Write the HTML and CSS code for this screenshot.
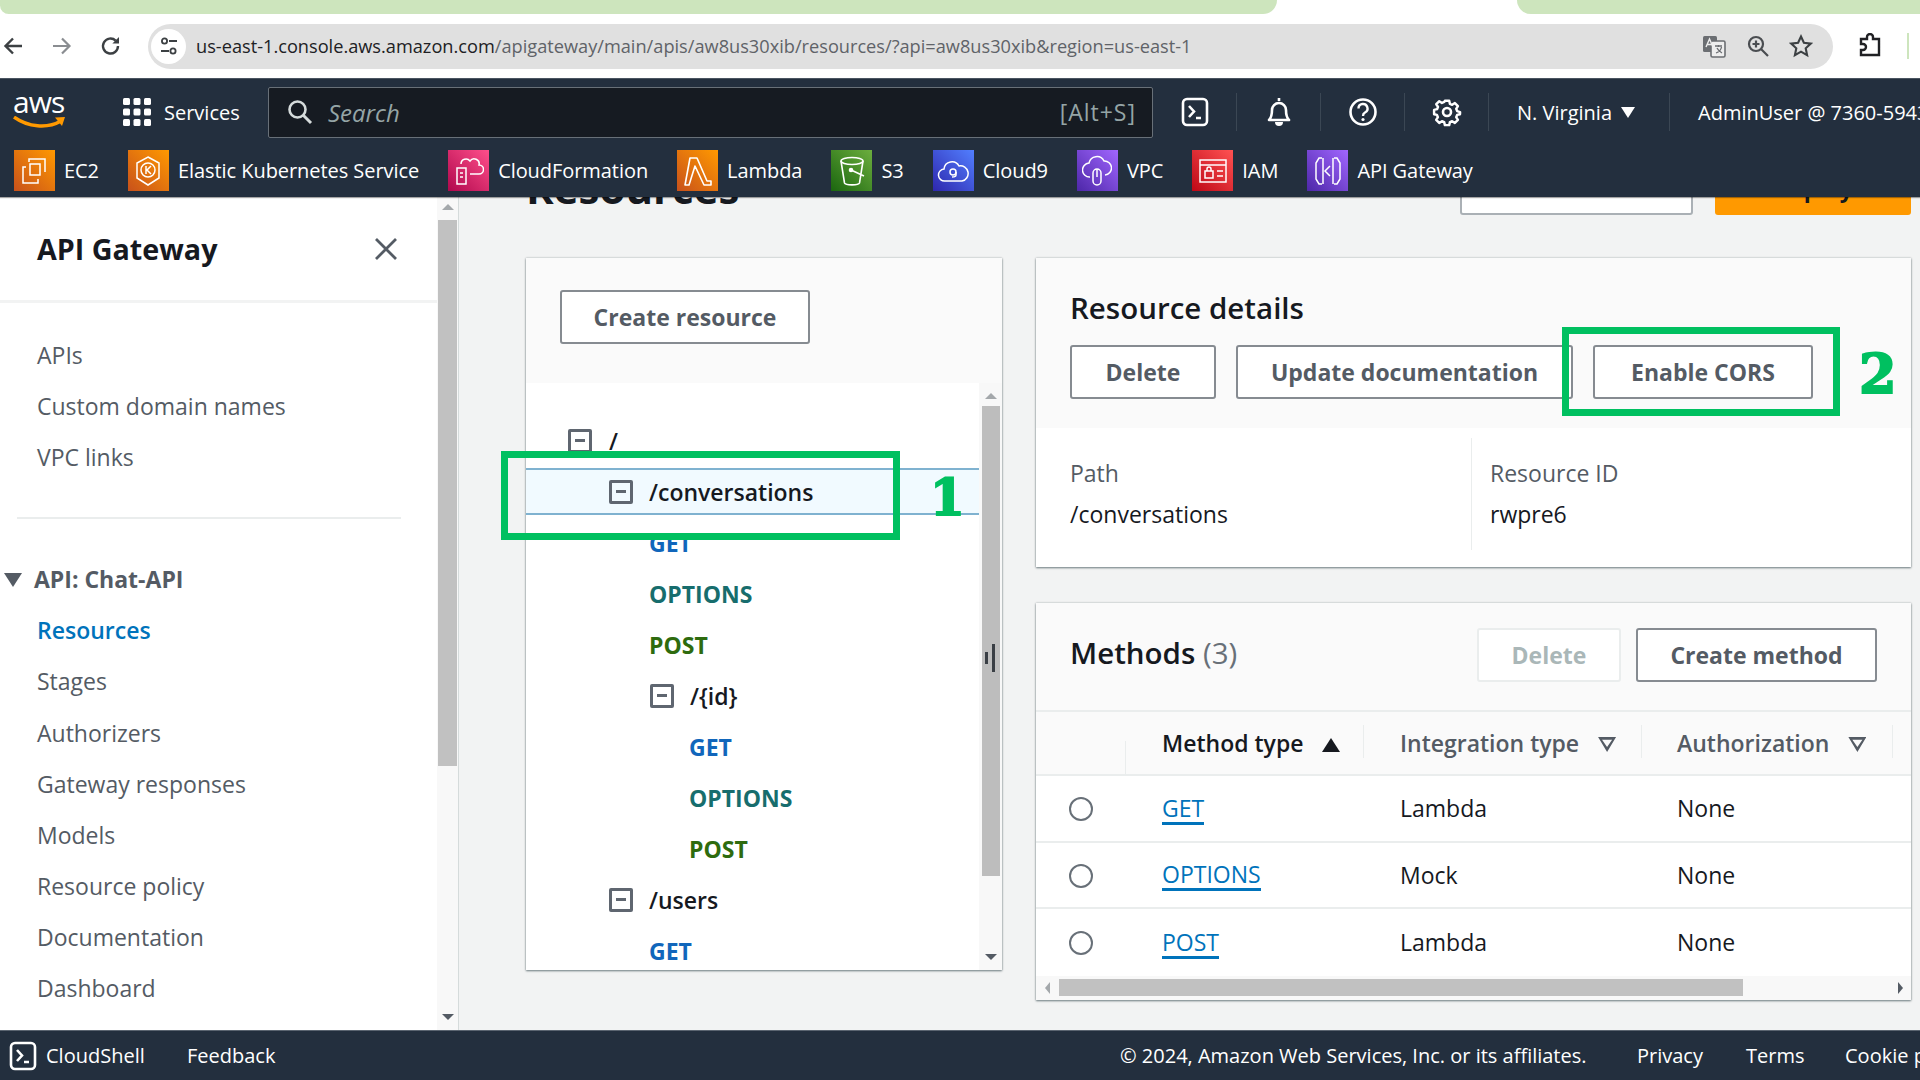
FILE: index.html
```html
<!DOCTYPE html>
<html lang="en">
<head>
    <meta charset="UTF-8">
    <title>API Gateway - Resources</title>
    <link rel="stylesheet" href="styles.css">
</head>
<body>
    <!-- browser chrome -->
    <div class="tab-strip">
        <div class="tab-left"></div>
        <div class="tab-right"></div>
    </div>
    <div class="browser-bar">
        <svg class="chrome-icon back" width="22" height="22" viewBox="0 0 22 22"><path d="M20 11H4M11 3.5 3.5 11l7.5 7.5" fill="none" stroke="#3c4043" stroke-width="2.4"/></svg>
        <svg class="chrome-icon forward" width="22" height="22" viewBox="0 0 22 22"><path d="M2 11h16M11 3.5l7.5 7.5-7.5 7.5" fill="none" stroke="#8a8d91" stroke-width="2.2"/></svg>
        <svg class="chrome-icon reload" width="22" height="22" viewBox="0 0 22 22"><path d="M18 11a7.5 7.5 0 1 1-2.3-5.4" fill="none" stroke="#3c4043" stroke-width="2.4"/><path d="M19 2v6.6h-6.6z" fill="#3c4043"/></svg>
        <div class="url-pill">
            <span class="tune-badge">
                <svg width="20" height="20" viewBox="0 0 20 20"><circle cx="5.5" cy="5" r="2.6" fill="none" stroke="#3c4043" stroke-width="1.8"/><path d="M10 5h8M2 15h8" stroke="#3c4043" stroke-width="1.8"/><circle cx="14" cy="15" r="2.6" fill="none" stroke="#3c4043" stroke-width="1.8"/></svg>
            </span>
            <span class="url-text"><b>us-east-1.console.aws.amazon.com</b>/apigateway/main/apis/aw8us30xib/resources/?api=aw8us30xib&amp;region=us-east-1</span>
            <svg class="pill-icon" width="26" height="26" viewBox="0 0 26 26"><rect x="2" y="3" width="14" height="16" rx="1.5" fill="#6b6e72"/><rect x="10" y="8" width="14" height="16" rx="1.5" fill="#eee" stroke="#6b6e72" stroke-width="1.6"/><path d="M14 13h7M17.500 12v2M15 20c3-1 5-3 5.500-6M16 15c1 2 3 4 5 5" fill="none" stroke="#6b6e72" stroke-width="1.3"/><path d="M5 14l3.500-8 3.500 8M6.500 11.500h4" fill="none" stroke="#eee" stroke-width="1.4"/></svg>
            <svg class="pill-icon" width="24" height="24" viewBox="0 0 24 24"><circle cx="10" cy="10" r="7" fill="none" stroke="#4a4d51" stroke-width="2.2"/><path d="M15 15l7 7M10 6.500v7M6.500 10h7" stroke="#4a4d51" stroke-width="2.200"/></svg>
            <svg class="pill-icon" width="24" height="24" viewBox="0 0 24 24"><path d="M12 2.500l2.900 6.300 6.900.8-5.100 4.700 1.400 6.800-6.100-3.500-6.100 3.500 1.400-6.800L2.200 9.600l6.900-.8z" fill="none" stroke="#3c4043" stroke-width="2.100"/></svg>
        </div>
        <svg class="puzzle" width="26" height="26" viewBox="0 0 26 26"><path d="M4 6h6V4a3 3 0 0 1 6 0v2h6v16H4v-5h2a3 3 0 0 0 0-6H4z" fill="none" stroke="#202124" stroke-width="2.4"/></svg>
        <span class="bar-tick"></span>
    </div>

    <!-- console top nav -->
    <header class="top-nav">
        <div class="nav-main">
            <div class="aws-logo">
                <span>aws</span>
                <svg width="54" height="13" viewBox="0 0 54 13"><path d="M1 1c14 10 33 12 47 4" fill="none" stroke="#f90" stroke-width="3.400"/><path d="M42 1.500l10-.5-3 9z" fill="#f90"/></svg>
            </div>
            <span class="logo-sep"></span>
            <svg class="grid-icon" width="28" height="28" viewBox="0 0 28 28" fill="#fff">
                <rect x="0" y="0" width="7" height="7" rx="1.500"/><rect x="10.500" y="0" width="7" height="7" rx="1.500"/><rect x="21" y="0" width="7" height="7" rx="1.500"/>
                <rect x="0" y="10.500" width="7" height="7" rx="1.500"/><rect x="10.500" y="10.500" width="7" height="7" rx="1.500"/><rect x="21" y="10.500" width="7" height="7" rx="1.500"/>
                <rect x="0" y="21" width="7" height="7" rx="1.500"/><rect x="10.500" y="21" width="7" height="7" rx="1.500"/><rect x="21" y="21" width="7" height="7" rx="1.500"/>
            </svg>
            <span class="services-label">Services</span>
            <div class="search-box">
                <svg width="26" height="26" viewBox="0 0 26 26"><circle cx="10.500" cy="10.500" r="8" fill="none" stroke="#d5dbdb" stroke-width="2.600"/><path d="M16 16l8 8" stroke="#d5dbdb" stroke-width="3"/></svg>
                <span class="search-placeholder">Search</span>
                <span class="search-hint">[Alt+S]</span>
            </div>
            <div class="nav-cell nav-cell-first">
                <svg width="28" height="30" viewBox="0 0 28 30"><rect x="2" y="2" width="24" height="26" rx="4" fill="none" stroke="#fff" stroke-width="2.600"/><path d="M8 9l5 5.500L8 20M15 21h5" fill="none" stroke="#fff" stroke-width="2.600"/></svg>
            </div>
            <div class="nav-cell">
                <svg width="30" height="32" viewBox="0 0 30 32"><path d="M15 2v3M5 24c3-3 3-6 3-10a7 7 0 0 1 14 0c0 4 0 7 3 10z" fill="none" stroke="#fff" stroke-width="2.600" stroke-linejoin="round"/><path d="M11 26a4 4 0 0 0 8 0z" fill="#fff"/></svg>
            </div>
            <div class="nav-cell">
                <svg width="30" height="30" viewBox="0 0 30 30"><circle cx="15" cy="15" r="12.500" fill="none" stroke="#fff" stroke-width="2.600"/><path d="M10.500 11.500a4.500 4.500 0 1 1 6.500 4c-1.500.8-2 1.500-2 3.500" fill="none" stroke="#fff" stroke-width="2.400"/><circle cx="15" cy="22.500" r="1.600" fill="#fff"/></svg>
            </div>
            <div class="nav-cell">
                <svg width="30" height="30" viewBox="0 0 30 30"><path d="M12.500 2h5l.8 3.600 2.600 1.100 3.100-2 3.500 3.500-2 3.100 1.100 2.600L30 15l-.1 2.500-3.300.8-1.100 2.600 2 3.100-3.500 3.500-3.100-2-2.600 1.100-.8 3.400h-5l-.8-3.400-2.600-1.100-3.100 2-3.500-3.500 2-3.100-1.100-2.600L.1 17.500V12.500l3.400-.8 1.100-2.600-2-3.100 3.500-3.500 3.100 2 2.600-1.100z" transform="translate(2 2) scale(.87)" fill="none" stroke="#fff" stroke-width="2.800" stroke-linejoin="round"/><circle cx="15" cy="15" r="4" fill="none" stroke="#fff" stroke-width="2.600"/></svg>
            </div>
            <div class="nav-cell nav-region">N. Virginia <span class="tri tri-down-white"></span></div>
            <div class="nav-cell nav-user">AdminUser @ 7360-5943-4152</div>
        </div>
        <nav class="shortcuts">
            <a class="shortcut"><span class="svc-icon svc-orange"><svg width="30" height="30" viewBox="0 0 30 30" fill="none" stroke="#fff" stroke-width="1.500"><rect x="10" y="8" width="10" height="11"/><path d="M12 3h13v13M6 11H3v16h15v-4"/><path d="M9 6V3h3"/></svg></span>EC2</a>
            <a class="shortcut"><span class="svc-icon svc-orange"><svg width="30" height="32" viewBox="0 0 30 32" fill="none" stroke="#fff" stroke-width="1.500"><path d="M15 2l11 6v15l-11 7-11-7V8z"/><circle cx="15" cy="15" r="7"/><path d="M13 11v8M18 11l-4 4 4 4"/></svg></span>Elastic Kubernetes Service</a>
            <a class="shortcut"><span class="svc-icon svc-pink"><svg width="30" height="30" viewBox="0 0 30 30" fill="none" stroke="#fff" stroke-width="1.500"><rect x="3" y="12" width="9" height="16"/><path d="M6 17h3M6 21h3M7 8a5 5 0 0 1 9-3 5 5 0 0 1 9 4 4 4 0 0 1 0 9h-9"/></svg></span>CloudFormation</a>
            <a class="shortcut"><span class="svc-icon svc-orange"><svg width="30" height="32" viewBox="0 0 30 32" fill="none" stroke="#fff" stroke-width="1.600"><path d="M7 3h7l10 23h4v4h-7L12 11 6 30H2z" stroke-linejoin="round"/></svg></span>Lambda</a>
            <a class="shortcut"><span class="svc-icon svc-green"><svg width="30" height="32" viewBox="0 0 30 32" fill="none" stroke="#fff" stroke-width="1.600"><ellipse cx="15" cy="6" rx="11" ry="3.500"/><path d="M4 6l3.500 22c1 2.500 14 2.500 15 0L26 6M14 15l13 6"/><circle cx="14" cy="15" r="1.500" fill="#fff"/></svg></span>S3</a>
            <a class="shortcut"><span class="svc-icon svc-blue"><svg width="32" height="26" viewBox="0 0 32 26" fill="none" stroke="#fff" stroke-width="1.500"><path d="M8 23a6 6 0 0 1-1-12 8 8 0 0 1 15-3 7 7 0 0 1 3 15z"/><circle cx="16" cy="14" r="3"/><path d="M19 14v3c0 2-3 2-4 2"/></svg></span>Cloud9</a>
            <a class="shortcut"><span class="svc-icon svc-purple"><svg width="30" height="34" viewBox="0 0 30 34" fill="none" stroke="#fff" stroke-width="1.500"><path d="M8 23a7 7 0 0 1-1-14 8 8 0 0 1 15-2 7 7 0 0 1 1 14"/><rect x="11" y="15" width="8" height="16" rx="4"/><path d="M15 15v8"/></svg></span>VPC</a>
            <a class="shortcut"><span class="svc-icon svc-red"><svg width="30" height="26" viewBox="0 0 30 26" fill="none" stroke="#fff" stroke-width="1.500"><rect x="2" y="2" width="26" height="22"/><path d="M2 7h26M19 13h6M19 18h6"/><rect x="7" y="13" width="8" height="7"/><path d="M9 13v-2a2 2 0 0 1 4 0v2"/></svg></span>IAM</a>
            <a class="shortcut"><span class="svc-icon svc-purple"><svg width="32" height="32" viewBox="0 0 32 32" fill="none" stroke="#fff" stroke-width="1.500"><path d="M10 3H7L4 8v16l3 5h3M22 3h3l3 5v16l-3 5h-3"/><path d="M18 11l-5 5 5 5M11 3v26M21 3v26"/></svg></span>API Gateway</a>
        </nav>
    </header>

    <main class="console-body">
        <aside class="side-nav">
            <div class="side-inner">
                <div class="side-head">
                    <h2>API Gateway</h2>
                    <svg width="24" height="24" viewBox="0 0 24 24"><path d="M2 2l20 20M22 2L2 22" stroke="#545b64" stroke-width="2.800"/></svg>
                </div>
                <ul class="side-list">
                    <li>APIs</li>
                    <li>Custom domain names</li>
                    <li>VPC links</li>
                </ul>
                <div class="side-divider"></div>
                <ul class="side-list side-list-api">
                    <li class="side-api"><span class="tri tri-side"></span>API: Chat-API</li>
                    <li class="side-active">Resources</li>
                    <li>Stages</li>
                    <li>Authorizers</li>
                    <li>Gateway responses</li>
                    <li>Models</li>
                    <li>Resource policy</li>
                    <li>Documentation</li>
                    <li>Dashboard</li>
                </ul>
            </div>
            <div class="side-scroll">
                <span class="tri tri-up"></span>
                <span class="side-thumb"></span>
                <span class="tri tri-down"></span>
            </div>
        </aside>

        <section class="content">
            <div class="page-head">
                <h1>Resources</h1>
                <button class="btn btn-actions">API actions</button>
                <button class="btn-deploy">Deploy</button>
            </div>
            <div class="columns">
                <div class="tree-panel">
                    <div class="tree-head">
                        <button class="btn btn-create">Create resource</button>
                    </div>
                    <div class="tree-body">
                        <div class="tree-list">
                            <div class="tree-row lvl-0"><span class="expander"></span><span class="res-name">/</span></div>
                            <div class="tree-row lvl-1 selected"><span class="expander"></span><span class="res-name">/conversations</span></div>
                            <div class="tree-row lvl-method"><span class="m-get">GET</span></div>
                            <div class="tree-row lvl-method"><span class="m-options">OPTIONS</span></div>
                            <div class="tree-row lvl-method"><span class="m-post">POST</span></div>
                            <div class="tree-row lvl-2"><span class="expander"></span><span class="res-name">/{id}</span></div>
                            <div class="tree-row lvl-method2"><span class="m-get">GET</span></div>
                            <div class="tree-row lvl-method2"><span class="m-options">OPTIONS</span></div>
                            <div class="tree-row lvl-method2"><span class="m-post">POST</span></div>
                            <div class="tree-row lvl-1"><span class="expander"></span><span class="res-name">/users</span></div>
                            <div class="tree-row lvl-method"><span class="m-get">GET</span></div>
                        </div>
                        <div class="tree-scroll">
                            <span class="tri tri-up"></span>
                            <span class="tree-thumb"><span class="grip"></span></span>
                            <span class="tri tri-down"></span>
                        </div>
                    </div>
                </div>

                <div class="right-col">
                    <div class="card">
                        <div class="card-head details-head">
                            <h3>Resource details</h3>
                            <div class="btn-row">
                                <button class="btn btn-delete">Delete</button>
                                <button class="btn btn-update">Update documentation</button>
                                <button class="btn btn-cors">Enable CORS</button>
                            </div>
                        </div>
                        <div class="details-body">
                            <div class="detail detail-path">
                                <div class="detail-label">Path</div>
                                <div class="detail-value">/conversations</div>
                            </div>
                            <div class="detail detail-id">
                                <div class="detail-label">Resource ID</div>
                                <div class="detail-value">rwpre6</div>
                            </div>
                        </div>
                    </div>

                    <div class="card methods-card">
                        <div class="card-head methods-head">
                            <h3>Methods <span class="count">(3)</span></h3>
                            <button class="btn btn-disabled">Delete</button>
                            <button class="btn btn-method">Create method</button>
                        </div>
                        <div class="table-head">
                            <div class="col-radio"><span class="col-sep"></span></div>
                            <div class="col-method th-active">Method type <span class="tri tri-sort"></span><span class="col-sep"></span></div>
                            <div class="col-type">Integration type <span class="tri-outline"></span><span class="col-sep"></span></div>
                            <div class="col-auth">Authorization <span class="tri-outline"></span><span class="col-sep"></span></div>
                        </div>
                        <div class="table-row">
                            <div class="col-radio"><span class="radio"></span></div>
                            <div class="col-method"><a class="link">GET</a></div>
                            <div class="col-type">Lambda</div>
                            <div class="col-auth">None</div>
                        </div>
                        <div class="table-row">
                            <div class="col-radio"><span class="radio"></span></div>
                            <div class="col-method"><a class="link">OPTIONS</a></div>
                            <div class="col-type">Mock</div>
                            <div class="col-auth">None</div>
                        </div>
                        <div class="table-row table-row-last">
                            <div class="col-radio"><span class="radio"></span></div>
                            <div class="col-method"><a class="link">POST</a></div>
                            <div class="col-type">Lambda</div>
                            <div class="col-auth">None</div>
                        </div>
                        <div class="h-scroll">
                            <span class="tri tri-left"></span>
                            <span class="h-thumb"></span>
                            <span class="tri tri-right"></span>
                        </div>
                    </div>
                </div>
            </div>
        </section>
    </main>

    <footer class="console-footer">
        <svg width="28" height="30" viewBox="0 0 28 30"><rect x="2" y="2" width="24" height="26" rx="4" fill="none" stroke="#fff" stroke-width="2.600"/><path d="M8 9l5 5.500L8 20M15 21h5" fill="none" stroke="#fff" stroke-width="2.600"/></svg>
        <span class="foot-shell">CloudShell</span>
        <span class="foot-feedback">Feedback</span>
        <span class="foot-copy">© 2024, Amazon Web Services, Inc. or its affiliates.</span>
        <span class="foot-privacy">Privacy</span>
        <span class="foot-terms">Terms</span>
        <span class="foot-cookie">Cookie preferences</span>
    </footer>

    <!-- tutorial annotations drawn over the screenshot -->
    <div class="mark mark-one"></div>
    <div class="mark mark-two"></div>
    <span class="mark-num mark-num-one">1</span>
    <span class="mark-num mark-num-two">2</span>
</body>
</html>
```

FILE: styles.css
```css
* {
    margin: 0;
    padding: 0;
    box-sizing: border-box;
}

html,
body {
    width: 1920px;
    height: 1080px;
    overflow: hidden;
}

body {
    position: relative;
    display: flex;
    flex-direction: column;
    font-family: "Open Sans", "Noto Sans", sans-serif;
    background: #f2f3f3;
    color: #16191f;
}

ul {
    list-style: none;
}

button {
    font-family: inherit;
}

/* browser chrome */
.tab-strip {
    height: 14px;
    display: flex;
    background: #fff;
    flex-shrink: 0;
}

.tab-left {
    width: 1277px;
    background: #cde5bd;
    border-radius: 0 0 16px 10px;
}

.tab-right {
    flex: 1;
    margin-left: 240px;
    background: #cde5bd;
    border-radius: 0 0 0 16px;
}

.browser-bar {
    height: 64px;
    flex-shrink: 0;
    background: #fff;
    display: flex;
    align-items: center;
}

.chrome-icon.back {
    margin-left: 2px;
}

.chrome-icon.forward {
    margin-left: 27px;
}

.chrome-icon.reload {
    margin-left: 27px;
}

.url-pill {
    margin-left: 26px;
    width: 1685px;
    height: 45px;
    background: #e0e0e0;
    border-radius: 23px;
    display: flex;
    align-items: center;
    padding-left: 3px;
    padding-right: 20px;
}

.tune-badge {
    width: 35px;
    height: 35px;
    border-radius: 50%;
    background: #fff;
    display: flex;
    align-items: center;
    justify-content: center;
    flex-shrink: 0;
}

.url-text {
    margin-left: 10px;
    flex: 1;
    font-size: 18.2px;
    color: #5f6368;
    white-space: nowrap;
}

.url-text b {
    font-weight: 400;
    color: #202124;
}

.pill-icon {
    margin-left: 19px;
}

.puzzle {
    margin-left: 24px;
}

.bar-tick {
    width: 2px;
    height: 26px;
    margin-left: 24px;
    background: #cde5bd;
}

/* console nav */
.top-nav {
    height: 119px;
    flex-shrink: 0;
    background: #232f3e;
    color: #fff;
    position: relative;
    z-index: 2;
    box-shadow: 0 1px 1px rgba(0, 0, 0, 0.35);
}

.nav-main {
    height: 67px;
    display: flex;
    align-items: center;
    padding-left: 13px;
    overflow: hidden;
    border-top: 1px solid #4a5561;
}

.aws-logo {
    width: 54px;
    height: 44px;
    position: relative;
    line-height: 30px;
    font-size: 30px;
    flex-shrink: 0;
}

.aws-logo span {
    display: block;
    margin-top: -3px;
    letter-spacing: -1px;
    font-family: "Open Sans", sans-serif;
}

.aws-logo svg {
    display: block;
    margin-top: -1px;
}

.logo-sep {
    width: 1px;
    height: 38px;
    margin-left: 28px;
    background: #3b4754;
}

.grid-icon {
    margin-left: 28px;
    flex-shrink: 0;
}

.services-label {
    margin-left: 13px;
    font-size: 20px;
    width: 75px;
    flex-shrink: 0;
}

.search-box {
    margin-left: 29px;
    width: 885px;
    height: 51px;
    flex-shrink: 0;
    background: #161b22;
    border: 1px solid #687078;
    border-radius: 2px;
    display: flex;
    align-items: center;
    padding: 0 16px 0 18px;
}

.search-placeholder {
    margin-left: 15px;
    font-size: 24px;
    font-style: italic;
    color: #95a5a6;
}

.search-hint {
    margin-left: auto;
    font-size: 23px;
    letter-spacing: 1px;
    color: #95a5a6;
}

.nav-cell {
    height: 38px;
    width: 84px;
    flex-shrink: 0;
    border-left: 1px solid #3b4754;
    display: flex;
    align-items: center;
    justify-content: center;
}

.nav-cell-first {
    border-left: 0;
    width: 83px;
}

.nav-region {
    width: 181px;
    justify-content: flex-start;
    padding-left: 28px;
    font-size: 20px;
    gap: 9px;
}

.nav-user {
    width: auto;
    justify-content: flex-start;
    padding-left: 28px;
    font-size: 20px;
    white-space: nowrap;
}

.shortcuts {
    height: 52px;
    display: flex;
    align-items: flex-start;
    padding-left: 14px;
    gap: 29px;
    font-size: 20px;
    letter-spacing: -0.06px;
}

.shortcut {
    display: flex;
    align-items: center;
    gap: 9px;
    height: 41px;
    margin-top: 5px;
    white-space: nowrap;
}

.svc-icon {
    width: 41px;
    height: 41px;
    display: flex;
    align-items: center;
    justify-content: center;
    flex-shrink: 0;
}

.svc-orange {
    background: linear-gradient(45deg, #c8511b, #f90);
}

.svc-pink {
    background: linear-gradient(45deg, #b0084d, #ff4f8b);
}

.svc-green {
    background: linear-gradient(45deg, #1b660f, #6cae3e);
}

.svc-blue {
    background: linear-gradient(45deg, #2e27ad, #527fff);
}

.svc-purple {
    background: linear-gradient(45deg, #4d27a8, #a166ff);
}

.svc-red {
    background: linear-gradient(45deg, #bd0816, #ff5252);
}

/* triangles */
.tri {
    display: inline-block;
    width: 0;
    height: 0;
    flex-shrink: 0;
}

.tri-up {
    border-left: 6px solid transparent;
    border-right: 6px solid transparent;
    border-bottom: 6px solid #a4a8ab;
}

.tri-down {
    border-left: 6px solid transparent;
    border-right: 6px solid transparent;
    border-top: 6px solid #545b64;
}

.tri-left {
    border-top: 6px solid transparent;
    border-bottom: 6px solid transparent;
    border-right: 5px solid #a4a8ab;
}

.tri-right {
    border-top: 6px solid transparent;
    border-bottom: 6px solid transparent;
    border-left: 5px solid #545b64;
}

.tri-down-white {
    border-left: 7px solid transparent;
    border-right: 7px solid transparent;
    border-top: 11px solid #fff;
}

.tri-side {
    border-left: 9px solid transparent;
    border-right: 9px solid transparent;
    border-top: 14px solid #545b64;
    margin-right: 12px;
}

.tri-sort {
    border-left: 9px solid transparent;
    border-right: 9px solid transparent;
    border-bottom: 14px solid #16191f;
    margin-left: 13px;
}

.tri-outline {
    display: inline-block;
    width: 18px;
    height: 15px;
    margin-left: 13px;
    background: #545b64;
    clip-path: polygon(0 0, 100% 0, 50% 100%, 0 0, 22% 18%, 50% 66%, 78% 18%, 22% 18%);
}

/* main area */
.console-body {
    flex: 1;
    min-height: 0;
    display: flex;
    overflow: hidden;
}

.side-nav {
    width: 459px;
    flex-shrink: 0;
    display: flex;
    background: #fff;
    border-right: 1px solid #d5dbdb;
}

.side-inner {
    width: 437px;
}

.side-head {
    height: 106px;
    border-bottom: 3px solid #f2f3f3;
    display: flex;
    align-items: center;
    justify-content: space-between;
    padding: 0 39px 0 37px;
}

.side-head h2 {
    font-size: 28.700px;
    font-weight: 700;
}

.side-list {
    padding-top: 27px;
    font-size: 23px;
    color: #545b64;
}

.side-list li {
    height: 51.100px;
    line-height: 51px;
    padding-left: 37px;
    white-space: nowrap;
}

.side-divider {
    margin: 34px 36px 0 17px;
    border-top: 2px solid #eaeded;
}

.side-list-api {
    padding-top: 35px;
}

.side-list .side-api {
    padding-left: 4px;
    font-weight: 700;
    display: flex;
    align-items: center;
}

.side-list .side-active {
    color: #0073bb;
    font-weight: 600;
}

.side-scroll {
    width: 21px;
    background: #f8f8f8;
    display: flex;
    flex-direction: column;
    align-items: center;
    padding: 7px 0 10px;
}

.side-thumb {
    width: 19px;
    height: 546px;
    margin-top: 10px;
    margin-bottom: auto;
    background: #c1c1c1;
}

.content {
    flex: 1;
    min-width: 0;
    padding: 0 9px 0 67px;
}

.page-head {
    height: 54px;
    margin-top: -36px;
    margin-bottom: 43px;
    display: flex;
    align-items: center;
}

.page-head h1 {
    font-size: 42px;
    font-weight: 700;
    margin-right: auto;
    line-height: 54px;
}

.btn {
    background: #fff;
    border: 2px solid #868b91;
    border-radius: 3px;
    color: #545b64;
    font-size: 23px;
    font-weight: 700;
    height: 54px;
    white-space: nowrap;
}

.btn-actions {
    width: 233px;
    border-color: #aab0b5;
}

.btn-deploy {
    width: 196px;
    height: 54px;
    margin-left: 22px;
    background: #f90;
    border: 0;
    border-radius: 3px;
    font-size: 23px;
    font-weight: 700;
    color: #16191f;
}

.columns {
    display: flex;
    gap: 34px;
    align-items: flex-start;
}

.tree-panel {
    width: 476px;
    height: 712px;
    flex-shrink: 0;
    background: #fff;
    box-shadow: 0 1px 2px rgba(0, 28, 36, 0.5), 0 0 2px rgba(0, 28, 36, 0.25);
    display: flex;
    flex-direction: column;
}

.tree-head {
    height: 125px;
    flex-shrink: 0;
    background: #fafafa;
    padding: 32px 0 0 34px;
}

.btn-create {
    width: 250px;
}

.tree-body {
    flex: 1;
    min-height: 0;
    display: flex;
}

.tree-list {
    flex: 1;
    padding-top: 32px;
    overflow: hidden;
}

.tree-row {
    height: 51px;
    display: flex;
    align-items: center;
    font-size: 23px;
    font-weight: 600;
    white-space: nowrap;
}

.tree-row.selected {
    height: 47px;
    margin: 2px 0;
    background: #f1faff;
    border-top: 2px solid #7fb2d0;
    border-bottom: 2px solid #7fb2d0;
}

.lvl-0 {
    padding-left: 42px;
}

.lvl-1 {
    padding-left: 83px;
}

.lvl-1 .expander {
    margin-right: 16px;
}

.lvl-2 {
    padding-left: 124px;
}

.lvl-2 .expander {
    margin-right: 16px;
}

.lvl-method {
    padding-left: 123px;
}

.lvl-method2 {
    padding-left: 163px;
}

.expander {
    width: 24px;
    height: 24px;
    flex-shrink: 0;
    border: 3px solid #5f6670;
    border-radius: 2px;
    display: flex;
    align-items: center;
    justify-content: center;
    margin-right: 17px;
}

.expander::before {
    content: "";
    width: 10px;
    height: 3px;
    background: #5f6670;
}

.lvl-method,
.lvl-method2 {
    font-weight: 700;
}

.m-get {
    color: #1166bb;
}

.m-options {
    color: #176d6d;
}

.m-post {
    color: #2e6b0e;
}

.tree-scroll {
    width: 23px;
    flex-shrink: 0;
    background: #f8f8f8;
    display: flex;
    flex-direction: column;
    align-items: center;
    padding: 10px 0 10px;
}

.tree-thumb {
    position: relative;
    width: 18px;
    height: 470px;
    margin-top: 7px;
    margin-bottom: auto;
    background: #bdbdbd;
}

.grip {
    position: absolute;
    left: 3px;
    top: 238px;
    width: 10px;
    height: 28px;
    border-right: 3px solid #3a3f45;
}

.grip::before {
    content: "";
    position: absolute;
    left: 0;
    top: 8px;
    width: 3px;
    height: 12px;
    background: #3a3f45;
}

.right-col {
    width: 875px;
    flex-shrink: 0;
    display: flex;
    flex-direction: column;
    gap: 36px;
}

.card {
    background: #fff;
    box-shadow: 0 1px 2px rgba(0, 28, 36, 0.5), 0 0 2px rgba(0, 28, 36, 0.25);
}

.card-head {
    background: #fafafa;
}

.card-head h3 {
    font-size: 29.500px;
    font-weight: 600;
}

.details-head {
    height: 170px;
    padding: 28px 0 0 34px;
}

.details-head h3 {
    line-height: 44px;
}

.btn-row {
    display: flex;
    margin-top: 15px;
    gap: 20px;
}

.btn-delete {
    width: 146px;
}

.btn-update {
    width: 337px;
}

.btn-cors {
    width: 220px;
}

.details-body {
    height: 139px;
    display: flex;
    font-size: 23px;
    padding-top: 10px;
}

.detail {
    height: 112px;
    padding-top: 19px;
}

.detail-path {
    width: 436px;
    padding-left: 34px;
    border-right: 1px solid #eaeded;
}

.detail-id {
    padding-left: 18px;
}

.detail-label {
    color: #545b64;
    line-height: 32px;
}

.detail-value {
    margin-top: 9px;
    line-height: 32px;
}

.methods-card {
    height: 397px;
    position: relative;
    display: flex;
    flex-direction: column;
    overflow: hidden;
}

.methods-head {
    height: 109px;
    flex-shrink: 0;
    display: flex;
    align-items: flex-start;
    padding: 25px 34px 0 34px;
    gap: 15px;
    border-bottom: 2px solid #eaeded;
}

.methods-head h3 {
    margin-right: auto;
    line-height: 50px;
}

.count {
    font-weight: 400;
    color: #687078;
}

.btn-disabled {
    width: 144px;
    border-color: #eaeded;
    color: #aab7b8;
}

.btn-method {
    width: 241px;
}

.table-head,
.table-row {
    display: flex;
    align-items: center;
    font-size: 23px;
    flex-shrink: 0;
    white-space: nowrap;
}

.table-head {
    height: 64px;
    background: #fafafa;
    border-bottom: 2px solid #eaeded;
    font-weight: 600;
    color: #545b64;
}

.table-row {
    height: 66.500px;
    border-bottom: 2px solid #eaeded;
}

.table-row-last {
    border-bottom: 0;
}

.table-head .th-active {
    color: #16191f;
}

.col-radio {
    width: 90px;
    padding-left: 33px;
    position: relative;
}

.col-method {
    width: 238px;
    padding-left: 36px;
    position: relative;
}

.col-type {
    width: 278px;
    padding-left: 36px;
    position: relative;
}

.col-auth {
    width: 251px;
    padding-left: 35px;
    position: relative;
}

.col-sep {
    position: absolute;
    right: 0;
    top: -2px;
    width: 1px;
    height: 33px;
    background: #eaeded;
}

.radio {
    display: block;
    width: 24px;
    height: 24px;
    margin-top: 2px;
    border: 2px solid #687078;
    border-radius: 50%;
}

.link {
    color: #0073bb;
    border-bottom: 3px solid #0073bb;
    line-height: 28px;
    display: inline-block;
}

.h-scroll {
    flex: 1;
    background: #f8f8f8;
    display: flex;
    align-items: center;
    padding: 0 8px 0 9px;
    gap: 9px;
}

.h-thumb {
    width: 684px;
    height: 17px;
    background: #c1c1c1;
    margin-right: auto;
}

.console-footer {
    height: 50px;
    flex-shrink: 0;
    background: #232f3e;
    color: #fff;
    display: flex;
    align-items: center;
    font-size: 20px;
    padding-left: 9px;
    white-space: nowrap;
    overflow: hidden;
    position: relative;
    z-index: 2;
    border-top: 1px solid #5a6470;
}

.console-footer span,
.console-footer svg {
    flex-shrink: 0;
}

.foot-shell {
    margin-left: 9px;
    width: 141px;
}

.foot-feedback {
    width: 933px;
}

.foot-copy {
    width: 517px;
}

.foot-privacy {
    width: 109px;
}

.foot-terms {
    width: 99px;
}

/* green tutorial marks */
.mark {
    position: absolute;
    border: 7px solid #00c060;
    z-index: 5;
}

.mark-one {
    left: 501px;
    top: 451px;
    width: 399px;
    height: 89px;
}

.mark-two {
    left: 1562px;
    top: 327px;
    width: 278px;
    height: 89px;
}

.mark-num {
    position: absolute;
    z-index: 5;
    color: #00c060;
    font-family: "DejaVu Serif", serif;
    font-weight: 700;
    -webkit-text-stroke: 2px #00c060;
}

.mark-num-one {
    left: 930px;
    top: 468px;
    font-size: 50px;
    line-height: 60px;
}

.mark-num-two {
    left: 1859px;
    top: 343px;
    font-size: 54px;
    line-height: 62px;
}
```
